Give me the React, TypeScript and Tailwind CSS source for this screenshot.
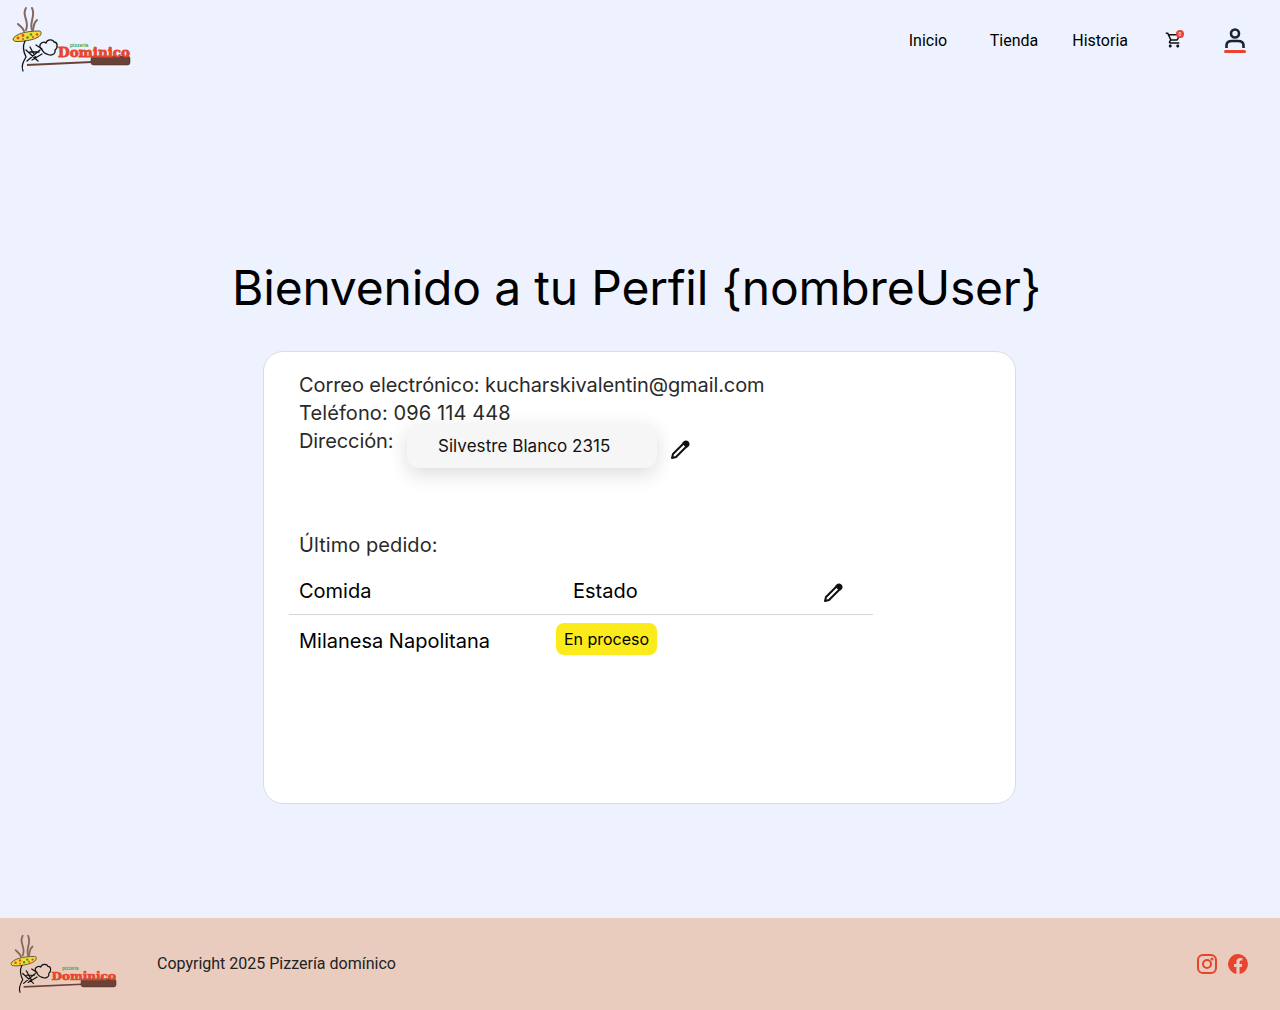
import { MdOutlineShoppingCart } from 'react-icons/md';

const Logo = ({ className }: { className: string }) => (
  <svg viewBox="0 0 120 68" className={className}>
    {/* smoke */}
    <g fill="none" stroke="#86685e" strokeWidth="2" strokeLinecap="round">
      <path d="M6 18 C9 21 11 22 12 25" />
      <path d="M14 2 C9 10 18 14 14 24" />
      <path d="M20 2 C24 10 17 16 20 24" />
      <path d="M25 14 C21 17 22 21 21 24" />
    </g>
    {/* pizza */}
    <path d="M1 33 C3 28 14 25 27 25 C29.5 25 29.5 27 28.5 29 C26 33 14 35.5 6 35.5 C3 35.5 1 35 1 33 Z" fill="#f2dc34" stroke="#332" strokeWidth="0.8" />
    <circle cx="6" cy="32" r="1.4" fill="#e2492f" />
    <circle cx="11" cy="29.5" r="1.4" fill="#e2492f" />
    <circle cx="11" cy="33" r="1" fill="#e2492f" />
    <circle cx="15.5" cy="31.5" r="1.3" fill="#2e9a3f" />
    <circle cx="19" cy="28.5" r="1.3" fill="#2e9a3f" />
    <circle cx="21" cy="31" r="1.1" fill="#e2492f" />
    <circle cx="25" cy="28.5" r="1.3" fill="#e2492f" />
    {/* chef */}
    <g fill="none" stroke="#111" strokeWidth="1.3" strokeLinecap="round" strokeLinejoin="round">
      <path d="M28 41 C27 37 32 35 34 37 C35 33 41 33 42 36 C46 36 46 42 43 44 C44 49 38 50 35 48 C32 48 30 44 28 41 Z" />
      <path d="M13 35 C10 41 12 47 14 51 C11 56 9 60 11 65" />
      <path d="M14 44 L26 55 M18 41 L24 52 M15 55 L28 44 M20 54 L30 48 M18 46 L27 46" />
      <path d="M24 39 L30 43" />
    </g>
    {/* peel */}
    <path d="M15 59 L80 56" stroke="#6b4238" strokeWidth="1.8" />
    <rect x="79" y="50" width="39" height="9" rx="2.5" fill="#6b4238" stroke="#3a2a24" strokeWidth="0.5" />
    <text x="58" y="40.5" fontFamily="'Liberation Sans', sans-serif" fontWeight="700" fontSize="5" fill="#3aa655">pizzeria</text>
    <text x="46" y="51" fontFamily="'DejaVu Serif', serif" fontWeight="700" fontSize="13" fill="#e4472d" stroke="#e4472d" strokeWidth="0.8" textLength="72" lengthAdjust="spacingAndGlyphs">Dominico</text>
  </svg>
);

const Pencil = ({ className }: { className: string }) => (
  <svg viewBox="0 0 20 20" className={className} fill="none" stroke="#111" strokeWidth="2">
    <path d="M2 18 L3 14 L13.5 3.5 L16.5 6.5 L6 17 Z" strokeLinejoin="round" />
    <path d="M13.5 3 C15 1.2 16.5 1.2 17.7 2.3 C19 3.5 19 5 17 6.5 Z" fill="#111" />
  </svg>
);

const App = () => {
  return (
    <div className="flex min-h-[1010px] flex-col bg-[#edf2fe] font-['Inter',sans-serif] text-black">
      <header className="flex h-20 items-center justify-between pr-[34px] pl-3">
        <Logo className="h-[68px] w-[120px]" />
        <nav className="flex items-center font-['Roboto',sans-serif] text-base">
          <a className="mt-[2px] w-[38px]">Inicio</a>
          <a className="mt-[2px] ml-[43px]">Tienda</a>
          <a className="mt-[2px] ml-[34px]">Historia</a>
          <span className="relative ml-[37px] flex h-6 w-[18px] items-center">
            <MdOutlineShoppingCart size={18} color="#111" />
            <span className="absolute top-[2px] right-[-1px] flex h-2 w-2 items-center justify-center rounded-full bg-[#e8432d] text-[5px] leading-none text-white">0</span>
          </span>
          <span className="ml-[41px] flex w-[22px] flex-col items-center">
            <svg viewBox="0 0 22 22" className="h-[22px] w-[22px]" fill="none" stroke="#1b2230" strokeWidth="2.6">
              <circle cx="11" cy="6.5" r="4" />
              <path d="M2.5 21 V18.5 C2.5 15.5 5 14 8 14 H14 C17 14 19.5 15.5 19.5 18.5 V21" />
            </svg>
            <span className="mt-[1px] h-[3px] w-[22px] rounded-full bg-[#e8432d]" />
          </span>
        </nav>
      </header>

      <main className="flex flex-1 flex-col items-center pt-[174px] pr-px">
        <h1 className="mr-[6px] text-5xl leading-[68px] tracking-[-0.2px]">Bienvenido a tu Perfil {'{nombreUser}'}</h1>
        <section className="mt-[29px] h-[453px] w-[753px] rounded-[20px] border border-[#d9dce3] bg-white pt-[19px] pl-[25px] text-xl leading-7 text-[#2a2a2a]">
          <p className="pl-2.5 tracking-[-0.085px]">Correo electrónico: kucharskivalentin@gmail.com</p>
          <p className="pl-2.5 tracking-[0.1px]">Teléfono: 096 114 448</p>
          <div className="flex items-start pl-2.5">
            <p className="w-[94px] tracking-[-0.1px]">Dirección:</p>
            <div className="mt-[-3px] ml-[14px] flex h-11 w-[250px] items-center rounded-xl bg-[#f6f6f6] pl-[31px] text-[17px] tracking-[0.05px] text-[#111] shadow-[0_6px_20px_rgba(0,0,0,0.14)]">
              Silvestre Blanco 2315
            </div>
            <Pencil className="mt-[13px] ml-[13px] h-5 w-5" />
          </div>
          <p className="mt-[63px] pl-2.5 tracking-[0.07px]">Último pedido:</p>
          <div className="w-[584px]">
            <div className="flex h-[56px] items-center border-b border-[#d6d6d6] pt-2 text-black">
              <span className="ml-2.5 w-[274px]">Comida</span>
              <span className="w-[250px]">Estado</span>
              <Pencil className="mt-1 h-5 w-5" />
            </div>
            <div className="flex items-start pt-2 text-black">
              <span className="mt-1 ml-2.5 w-[257px]">Milanesa Napolitana</span>
              <span className="flex h-8 w-[101px] items-center justify-center rounded-lg bg-[#fbeb1b] text-base">En proceso</span>
            </div>
          </div>
        </section>
      </main>

      <footer className="flex h-[92px] items-center bg-[#e9ccbd] pr-8 pl-[10px]">
        <Logo className="h-[61px] w-[108px]" />
        <p className="ml-[39px] font-['Roboto',sans-serif] text-base text-[#222]">Copyright 2025 Pizzería domínico</p>
        <div className="ml-auto flex items-center gap-[11px]">
          <svg viewBox="0 0 20 20" className="h-5 w-5" fill="none" stroke="#e8432d" strokeWidth="2">
            <rect x="1" y="1" width="18" height="18" rx="5" />
            <circle cx="10" cy="10" r="4" />
            <circle cx="15" cy="5" r="0.6" />
          </svg>
          <svg viewBox="0 0 20 20" className="h-5 w-5">
            <path fill="#e8432d" d="M20 10 A10 10 0 1 0 8.4 19.9 V13 H6 V10 H8.4 V7.8 C8.4 5.3 9.9 3.9 12.2 3.9 C13.3 3.9 14.4 4.1 14.4 4.1 V6.6 H13.2 C12 6.6 11.6 7.3 11.6 8.1 V10 H14.3 L13.9 13 H11.6 V19.9 A10 10 0 0 0 20 10 Z" />
          </svg>
        </div>
      </footer>
    </div>
  );
};

export default App;
